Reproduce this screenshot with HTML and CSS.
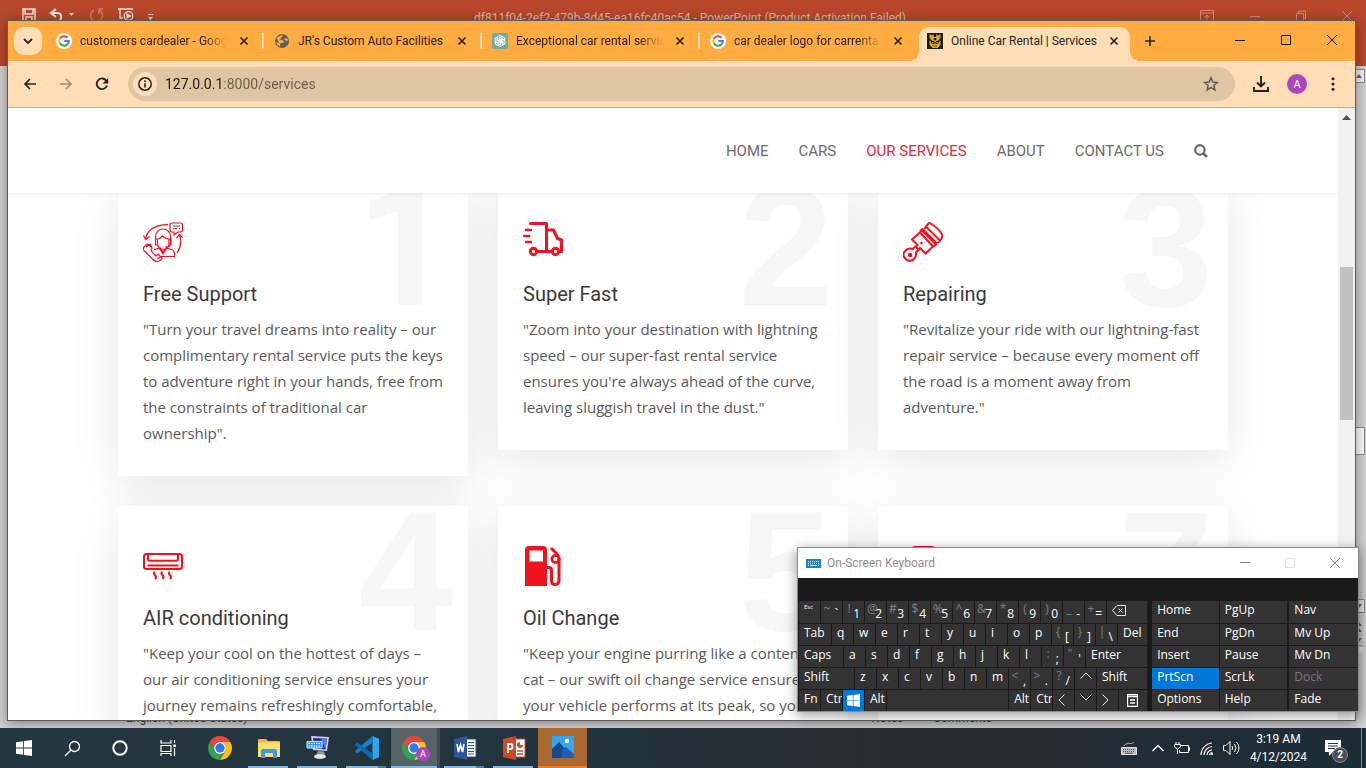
FILE: index.html
```html
<!DOCTYPE html>
<html lang="en">
<head>
<meta charset="utf-8">
<title>Online Car Rental | Services</title>
<link rel="stylesheet" href="styles.css">
</head>
<body>
<svg class="defs" aria-hidden="true">
  <symbol id="google" viewBox="0 0 16 16"><circle cx="8" cy="8" r="8" fill="#fff"/><g fill="none" stroke-width="2.1"><path d="M3.9 5.7A4.8 4.8 0 0 1 11.5 4.7" stroke="#ea4335"/><path d="M3.9 10.3A4.8 4.8 0 0 1 3.9 5.6" stroke="#fbbc05"/><path d="M11.2 11.6A4.8 4.8 0 0 1 3.9 10.2" stroke="#34a853"/><path d="M8.2 8H12.8A4.8 4.8 0 0 1 11.1 11.7" stroke="#4285f4"/></g></symbol>
  <symbol id="close" viewBox="0 0 10 10"><path d="M1.5 1.5l7 7M8.5 1.5l-7 7" stroke="#2a241c" stroke-width="1.7"/></symbol>
  <symbol id="chrome" viewBox="0 0 24 24"><path d="M2.47 6.5A11 11 0 0 1 21.53 6.5H12A5.5 5.5 0 0 0 7.24 14.75Z" fill="#e8453c"/><path d="M21.53 6.5A11 11 0 0 1 12 23L16.76 14.75A5.5 5.5 0 0 0 12 6.5Z" fill="#fbc116"/><path d="M12 23A11 11 0 0 1 2.47 6.5L7.24 14.75A5.5 5.5 0 0 0 16.76 14.75Z" fill="#30a350"/><circle cx="12" cy="12" r="5.5" fill="#fff"/><circle cx="12" cy="12" r="4.3" fill="#2b7de9"/></symbol>
  <symbol id="windows" viewBox="0 0 16 16"><path d="M0 2.3L7.2 1.2V7.6H0zM8 1.1L16 0v7.6H8zM0 8.4h7.2v6.4L0 13.7zM8 8.4h8V16l-8-1.1z" fill="#fff"/></symbol>
</svg>

<div class="desktop">
  <div class="workspace">

    <section class="ppt" aria-label="PowerPoint">
      <header class="ppt-bar">
        <div class="ppt-quick">
          <svg width="14" height="14" viewBox="0 0 14 14" fill="none" stroke="#f3ddd6" stroke-width="1.5"><path d="M1 1h12v12H1zM3 1v5h8V1M4 13V9h6v4"/></svg>
          <svg width="28" height="14" viewBox="0 0 28 14"><path d="M7 1L2 5l5 4M2.500 5H8q5 0 4 5t-4 4" fill="none" stroke="#f6e5df" stroke-width="2"/><path d="M20 5h5l-2.500 3z" fill="#f0cfc4"/></svg>
          <svg width="14" height="14" viewBox="0 0 14 14" fill="none" stroke="#cf7b63" stroke-width="1.500"><path d="M9 2a6 6 0 1 1-5 0M9 6V1h4"/></svg>
          <svg width="17" height="14" viewBox="0 0 17 14" fill="none" stroke="#f3ddd6" stroke-width="1.300"><path d="M1 1h15M3 1v9h3"/><circle cx="11.500" cy="8" r="4.300"/><path d="M10 6l3.500 2L10 10z" fill="#f3ddd6"/></svg>
          <svg width="7" height="12" viewBox="0 0 7 12"><path d="M1 6.500h5" stroke="#f3ddd6"/><path d="M1 9h5L3.500 12z" fill="#f3ddd6"/></svg>
        </div>
        <p class="ppt-title">df811f04-2ef2-479b-8d45-ea16fc40ac54 - PowerPoint (Product Activation Failed)</p>
        <div class="ppt-controls">
          <svg width="14" height="12" viewBox="0 0 14 12"><path d="M.5.500h13v11H.5zM.5 3h13M7 11V5M4.500 7.500L7 5l2.500 2.500"/></svg>
          <svg width="10" height="12" viewBox="0 0 10 12"><path d="M0 6.500h10"/></svg>
          <svg width="10" height="12" viewBox="0 0 10 12"><path d="M.5 3.500h7v7h-7zM2.500 3V1h7v7.500H8"/></svg>
          <svg width="10" height="12" viewBox="0 0 10 12"><path d="M0 1l10 10M10 1L0 11"/></svg>
        </div>
      </header>
      <div class="ppt-side">
        <svg width="12" height="600" viewBox="0 0 12 600" fill="none" stroke="#8a8a8a">
          <path d="M-1 3.500h11.500v13H-1z" fill="#eee"/><path d="M2 12l3-4 3 4z" fill="#666" stroke="none"/>
          <path d="M-1 361.500h11.500v27H-1z" fill="#fafafa"/>
          <path d="M-1 533.500h11.500v13H-1zM-1 600v-20h11.500" fill="#eee"/>
          <path d="M2 538h6l-3 4zM2 560l3-4 3 4zM2 566l3-4 3 4zM2 572h6l-3 4z" fill="#666" stroke="none"/>
        </svg>
      </div>
      <footer class="ppt-status"><span>English (United States)</span><span class="ppt-notes">≙ Notes</span><span>▭ Comments</span></footer>
    </section>

    <section class="browser" aria-label="Browser window">
      <div class="tabstrip">
        <button class="tab-search" aria-label="Search tabs"><svg width="10" height="6" viewBox="0 0 10 6"><path d="M1 1l4 4 4-4" fill="none" stroke="#222" stroke-width="1.800"/></svg></button>
        <div class="tab"><svg class="fav"><use href="#google"/></svg><span class="tab-title fade">customers cardealer - Google Search</span><button aria-label="Close tab"><svg class="x"><use href="#close"/></svg></button></div>
        <div class="tab"><svg class="fav" viewBox="0 0 16 16"><circle cx="8" cy="8" r="7" fill="#5c6064"/><path d="M2.500 4.500L6 3l3-1.500L8 4 5.500 6.500l3 .5 1.500 1.500-1 1.500-3 .2L2 9l1.500 3 3 2-.5-2.500zM9.500 6l3-.8L14.500 7l-2 1z" fill="#ffac42"/></svg><span class="tab-title">JR's Custom Auto Facilities</span><button aria-label="Close tab"><svg class="x"><use href="#close"/></svg></button></div>
        <div class="tab"><svg class="fav" viewBox="0 0 16 16"><rect width="16" height="16" rx="2" fill="#74aa9c"/><g fill="none" stroke="#fff" stroke-width="1"><path id="petal" d="M5.200 7.900V5A2.600 2.600 0 0 1 9.800 3.600L7 5.200V9.500"/><use href="#petal" transform="rotate(60 8 8)"/><use href="#petal" transform="rotate(120 8 8)"/><use href="#petal" transform="rotate(180 8 8)"/><use href="#petal" transform="rotate(240 8 8)"/><use href="#petal" transform="rotate(300 8 8)"/></g></svg><span class="tab-title fade">Exceptional car rental services</span><button aria-label="Close tab"><svg class="x"><use href="#close"/></svg></button></div>
        <div class="tab last"><svg class="fav"><use href="#google"/></svg><span class="tab-title fade">car dealer logo for carrental - Google</span><button aria-label="Close tab"><svg class="x"><use href="#close"/></svg></button></div>
        <div class="tab active"><svg class="fav" viewBox="0 0 16 16"><path fill="#17180f" d="M0 0h16v16H0z"/><path d="M2.500 1v4l1.500 1-1.500 2v4l3 3h5l3-3V8L12 6l1.500-1V1L11 2.500 9.500 1 9 4H7L6.500 1 5 2.500z" fill="#e4a41e"/><path d="M3.500 7l4 2-.5 2-2.500-1zM12.500 7l-4 2 .5 2 2.500-1zM6 13h4M7 5v2h2V5" fill="#17180f" stroke="#17180f" stroke-width=".5"/><path d="M5 9.200h1.500v1H5zM9.500 9.200H11v1H9.500z" fill="#6fc3e8"/></svg><span class="tab-title">Online Car Rental | Services</span><button aria-label="Close tab"><svg class="x"><use href="#close"/></svg></button></div>
        <button class="new-tab" aria-label="New tab"><svg width="12" height="12" viewBox="0 0 12 12"><path d="M6 1v10M1 6h10" stroke="#2a241c" stroke-width="1.600"/></svg></button>
        <div class="window-controls">
          <button aria-label="Minimize"><svg width="10" height="10" viewBox="0 0 10 10"><path d="M0 5.500h10"/></svg></button>
          <button aria-label="Maximize"><svg width="10" height="10" viewBox="0 0 10 10"><path d="M.5.500h9v9h-9z"/></svg></button>
          <button aria-label="Close"><svg width="10" height="10" viewBox="0 0 10 10"><path d="M0 0l10 10M10 0L0 10"/></svg></button>
        </div>
      </div>

      <div class="toolbar">
        <button aria-label="Back"><svg width="14" height="12" viewBox="0 0 14 12" fill="none" stroke="#222" stroke-width="1.700"><path d="M13 6H2M7 1L2 6l5 5"/></svg></button>
        <button aria-label="Forward"><svg width="14" height="12" viewBox="0 0 14 12" fill="none" stroke="#a08c74" stroke-width="1.700"><path d="M1 6h11M7 1l5 5-5 5"/></svg></button>
        <button aria-label="Reload"><svg width="14" height="14" viewBox="0 0 14 14"><path d="M12 8.500A5.300 5.300 0 1 1 11.500 4" fill="none" stroke="#222" stroke-width="1.800"/><path d="M13.200 1v5.500H7.700z" fill="#222"/></svg></button>
        <div class="omnibox">
          <span class="site-info"><svg width="14" height="14" viewBox="0 0 14 14"><circle cx="7" cy="7" r="6.200" fill="none" stroke="#222" stroke-width="1.500"/><path d="M7 6.200v4.300M7 3.300v1.600" stroke="#222" stroke-width="1.600"/></svg></span>
          <input type="text" aria-label="Address" value="127.0.0.1:8000/services">
          <button aria-label="Bookmark"><svg width="16" height="16" viewBox="0 0 16 16"><path d="M8 1.800l1.800 4.300 4.600.4-3.500 3 1 4.500L8 11.600 4.100 14l1-4.500-3.500-3 4.600-.4z" fill="none" stroke="#5f5a55" stroke-width="1.500"/></svg></button>
        </div>
        <button class="download" aria-label="Downloads"><svg width="16" height="16" viewBox="0 0 16 16" fill="none" stroke="#222" stroke-width="1.900"><path d="M8 0v10M4 6.500l4 4 4-4M1 11v4h14v-4"/></svg></button>
        <button class="avatar">A</button>
        <button class="menu" aria-label="Menu"><svg width="4" height="14" viewBox="0 0 4 14" fill="#222"><circle cx="2" cy="1.700" r="1.500"/><circle cx="2" cy="7" r="1.500"/><circle cx="2" cy="12.300" r="1.500"/></svg></button>
      </div>

      <div class="viewport">
        <div class="page">
          <header class="site-header">
            <nav>
              <a href="#">HOME</a><a href="#">CARS</a><a href="#" class="current">OUR SERVICES</a><a href="#">ABOUT</a><a href="#">CONTACT US</a>
              <a href="#" class="search" aria-label="Search"><svg width="14" height="14" viewBox="0 0 14 14" fill="none" stroke="#666"><circle cx="5.900" cy="5.900" r="4.700" stroke-width="2.200"/><path d="M9.300 9.300L13 13" stroke-width="2.600"/></svg></a>
            </nav>
          </header>
          <main class="services">
            <article class="card">
              <span class="num plain">1</span>
              <svg class="icon" viewBox="0 0 40 40" fill="none" stroke="#f1121f" stroke-width="1.200"><path d="M2.500 17Q5 3 25 2.600M.5 13.500l2.200 4 3.800-3"/><path d="M34 31q6-9 2.500-18M33.500 16l3-3.600 3 3.200"/><path d="M29 1h8.500q2 0 2 2v5q0 2-2 2H35l-4 3v-3h-2q-2 0-2-2V3q0-2 2-2z"/><path d="M30 4h7M30 6.700h4M36 6.700h1" stroke-width="1"/><path d="M12.500 22V14.500a7.500 7.500 0 0 1 15 0V22M14.500 17q2 0 5-3 3 3 6.500 3v4.500a5.700 5.700 0 0 1-11.500 0zM12.500 17h2v6h-2zM26 17h2v6h-2zM27 23q0 2-5 2"/><path d="M11 27.500l6-1.500 3 4 3.500-4 5 1.500q3.500 1 3 7H19M16.500 26.500L20 32l4-6"/><path d="M1 25l2.500-2.500q1-1 2 0L9 26q-3 2 4 8l2-2 3.500 3.500q1 1 0 2L16 39q-3 1.500-6-1.500L2.500 30Q-1 27 1 25zM3 25l4-3 2 3M14 37l5-3"/></svg>
              <h2>Free Support</h2>
              <p>"Turn your travel dreams into reality – our complimentary rental service puts the keys to adventure right in your hands, free from the constraints of traditional car ownership".</p>
            </article>
            <article class="card">
              <span class="num">2</span>
              <svg class="icon" viewBox="0 0 40 40" fill="none" stroke="#f1121f" stroke-width="3" stroke-linejoin="round" stroke-linecap="round"><path d="M7.500 1.500H23.500V29.500M24 8h6.500l4 8.500 4 1.500v11.500h-3M14 29.500h14.500"/><path d="M3 8h5M1.200 14h5M3 20h5" stroke-width="2.400"/><circle cx="10.500" cy="29.500" r="3.200"/><circle cx="32.500" cy="29.500" r="3.200"/></svg>
              <h2>Super Fast</h2>
              <p>"Zoom into your destination with lightning speed – our super-fast rental service ensures you're always ahead of the curve, leaving sluggish travel in the dust."</p>
            </article>
            <article class="card">
              <span class="num">3</span>
              <svg class="icon" viewBox="0 0 40 40" fill="none" stroke="#f1121f" stroke-width="2"><path d="M4 27.500q3-1.500 5.500-.5l5-4-5.500-5.500 8-7L30 24.500l-7.500 7L17 26l-4 4.500q.5 3.500-1.500 6-3 3.500-7.500 1.500-5-3-3-7.500Q2 28.500 4 27.500z"/><circle cx="7" cy="33" r="1.300" fill="#f1121f"/><path d="M17 9.500l1.500-1.500L33 22.500l-2.500 2M19 6.500l15 15M21.500 7L23 4.500 37 18.500 35 21M23 4.500L25.500 1.500q1-1 2 0 8 4.500 11.500 11 1 3-2 6M12.500 24.500l4 4"/><circle cx="18.500" cy="21" r=".6" stroke-width="1.400"/></svg>
              <h2>Repairing</h2>
              <p>"Revitalize your ride with our lightning-fast repair service – because every moment off the road is a moment away from adventure."</p>
            </article>
            <article class="card">
              <span class="num">4</span>
              <svg class="icon" viewBox="0 0 40 40" fill="none" stroke="#f1121f" stroke-width="2"><rect x="1" y="8" width="38" height="15" rx="2.500"/><path d="M5 8v5q0 1.800 2 1.800h26q2 0 2-1.800V8M4.500 19.500h31"/><path d="M12 26q-2 1.300 0 3.300t0 3.700M19.500 26q-2 1.300 0 3.300t0 3.700M27 26q-2 1.300 0 3.300t0 3.700" stroke-width="2.200"/></svg>
              <h2>AIR conditioning</h2>
              <p>"Keep your cool on the hottest of days – our air conditioning service ensures your journey remains refreshingly comfortable,</p>
            </article>
            <article class="card">
              <span class="num">5</span>
              <svg class="icon" viewBox="0 0 40 40" fill="none" stroke="#f1121f"><path d="M2 40V4q0-4 4-4h14q4 0 4 4v36zM6.500 4.500v11H20v-11z" fill="#f1121f" fill-rule="evenodd" stroke="none"/><path d="M24 21.500h2q2.500 0 2.500 3V35q0 3.500 3.500 3.500t4-3.500V12q0-2-2-4l-6-6" stroke-width="3"/><circle cx="32.500" cy="13" r="3.600" stroke-width="2.800"/></svg>
              <h2>Oil Change</h2>
              <p>"Keep your engine purring like a content cat – our swift oil change service ensures your vehicle performs at its peak, so you</p>
            </article>
            <article class="card">
              <span class="num">7</span>
              <svg class="icon" viewBox="0 0 40 40" fill="none" stroke="#f1121f" stroke-width="3"><rect x="8" y="1.500" width="25" height="37" rx="4"/></svg>
            </article>
          </main>
        </div>
        <div class="scrollbar"><svg width="9" height="5" viewBox="0 0 9 5"><path d="M0 5l4.500-5L9 5z" fill="#505050"/></svg><span class="thumb"></span></div>
      </div>
    </section>

    <section class="osk" aria-label="On-Screen Keyboard">
      <header class="osk-title">
        <svg width="15" height="9" viewBox="0 0 15 9"><path d="M0 0h15v9H0z" fill="#2a7ac8"/><path d="M2 2.500h11M2 4.500h11" stroke="#fff" stroke-dasharray="1 1"/><path d="M2 6.500h1M4 6.500h7M12 6.500h1" stroke="#fff"/></svg>
        <span>On-Screen Keyboard</span>
        <div class="osk-controls">
          <svg width="10" height="10" viewBox="0 0 10 10" stroke="#888"><path d="M0 4.500h10"/></svg>
          <svg width="10" height="10" viewBox="0 0 10 10" stroke="#e4e4e4"><path d="M.5.500h9v9h-9z"/></svg>
          <svg width="10" height="10" viewBox="0 0 10 10" stroke="#888"><path d="M0 0l10 10M10 0L0 10"/></svg>
        </div>
      </header>
      <div class="osk-body">
        <div class="keys">
          <div class="row">
            <button class="esc">Esc</button><button class="dual"><i>~</i><b>`</b></button><button class="dual"><i>!</i><b>1</b></button><button class="dual"><i>@</i><b>2</b></button><button class="dual"><i>#</i><b>3</b></button><button class="dual"><i>$</i><b>4</b></button><button class="dual"><i>%</i><b>5</b></button><button class="dual"><i>^</i><b>6</b></button><button class="dual"><i>&amp;</i><b>7</b></button><button class="dual"><i>*</i><b>8</b></button><button class="dual"><i>(</i><b>9</b></button><button class="dual"><i>)</i><b>0</b></button><button class="dual"><i>_</i><b>-</b></button><button class="dual"><i>+</i><b>=</b></button><button class="grow" aria-label="Backspace"><svg width="14" height="11" viewBox="0 0 14 11" fill="none" stroke="#eee"><path d="M5 .5h8.500v10H5L.5 5.500zM6.500 3.500l4 4M10.500 3.500l-4 4"/></svg></button>
          </div>
          <div class="row">
            <button class="tabkey">Tab</button><button>q</button><button>w</button><button>e</button><button>r</button><button>t</button><button>y</button><button>u</button><button>i</button><button>o</button><button>p</button><button class="dual"><i>{</i><b>[</b></button><button class="dual"><i>}</i><b>]</b></button><button class="dual"><i>|</i><b>\</b></button><button class="grow">Del</button>
          </div>
          <div class="row">
            <button class="caps">Caps</button><button>a</button><button>s</button><button>d</button><button>f</button><button>g</button><button>h</button><button>j</button><button>k</button><button>l</button><button class="dual"><i>:</i><b>;</b></button><button class="dual"><i>"</i><b>'</b></button><button class="grow">Enter</button>
          </div>
          <div class="row">
            <button class="shift">Shift</button><button>z</button><button>x</button><button>c</button><button>v</button><button>b</button><button>n</button><button>m</button><button class="dual"><i>&lt;</i><b>,</b></button><button class="dual"><i>&gt;</i><b>.</b></button><button class="dual"><i>?</i><b>/</b></button><button aria-label="Up"><svg width="12" height="7" viewBox="0 0 12 7"><path d="M.5 6.500L6 1l5.500 5.500" fill="none" stroke="#eee"/></svg></button><button class="grow">Shift</button>
          </div>
          <div class="row">
            <button>Fn</button><button>Ctrl</button><button class="on win" aria-label="Windows"><svg width="13" height="13"><use href="#windows"/></svg></button><button>Alt</button><button class="grow" aria-label="Space"></button><button>Alt</button><button>Ctrl</button><button aria-label="Left"><svg width="7" height="12" viewBox="0 0 7 12"><path d="M6.500.5L1 6l5.500 5.500" fill="none" stroke="#eee"/></svg></button><button aria-label="Down"><svg width="12" height="7" viewBox="0 0 12 7"><path d="M.5.500L6 6 11.500.500" fill="none" stroke="#eee"/></svg></button><button aria-label="Right"><svg width="7" height="12" viewBox="0 0 7 12"><path d="M.5.500L6 6 .5 11.500" fill="none" stroke="#eee"/></svg></button><button class="ctx" aria-label="Menu"><svg width="11" height="13" viewBox="0 0 11 13" fill="none" stroke="#fff"><path d="M.5.500h10v12H.5zM0 2.500h11M3 6h5M3 9h5" stroke-width="1.400"/></svg></button>
          </div>
        </div>
        <div class="pad"><button>Home</button><button>End</button><button>Insert</button><button class="on">PrtScn</button><button>Options</button></div>
        <div class="pad"><button>PgUp</button><button>PgDn</button><button>Pause</button><button>ScrLk</button><button>Help</button></div>
        <div class="pad"><button>Nav</button><button>Mv Up</button><button>Mv Dn</button><button disabled>Dock</button><button>Fade</button></div>
      </div>
    </section>
  </div>

  <footer class="taskbar">
    <button class="sys" aria-label="Start"><svg width="16" height="16"><use href="#windows"/></svg></button>
    <button class="sys" aria-label="Search"><svg width="17" height="17" viewBox="0 0 17 17" fill="none" stroke="#fff" stroke-width="1.300"><circle cx="10.500" cy="6.500" r="5"/><path d="M7 10L1 16"/></svg></button>
    <button class="sys" aria-label="Cortana"><svg width="16" height="16" viewBox="0 0 16 16"><circle cx="8" cy="8" r="6.700" fill="none" stroke="#fff" stroke-width="2"/></svg></button>
    <button class="sys" aria-label="Task view"><svg width="17" height="16" viewBox="0 0 17 16" fill="none" stroke="#fff" stroke-width="1.200"><path d="M1 0v3h10V0M1 5.500h10v6H1zM1 16v-2.500h10V16M14.500 0v3M14.500 8v8"/><path d="M13.300 4.500h2.500v2.500h-2.500z" fill="#fff" stroke="none"/></svg></button>
    <button class="app first" aria-label="Chrome"><svg width="26" height="26"><use href="#chrome"/></svg></button>
    <button class="app run" aria-label="File Explorer"><svg width="22" height="22" viewBox="0 0 22 22"><path d="M0 3q0-1 1-1h7l2 2h11q1 0 1 1v14H0z" fill="#f2b632"/><path d="M0 5.500h22V20H0z" fill="#fddc73"/><path d="M3 21v-7q0-2 2-2h12q2 0 2 2v7h-4v-5H7v5z" fill="#3c9bdc"/></svg></button>
    <button class="app run" aria-label="On-Screen Keyboard"><svg width="24" height="24" viewBox="0 0 24 24"><path d="M5 0l18 1-2 14-14-1z" fill="#cfd5dc"/><path d="M7 2l14 .5-1.500 11L8 12.500z" fill="#1a35c9"/><path d="M15 3l6-.5-1.500 11z" fill="#5877ea"/><path d="M12 15l6 .500 1 4-9 .5z" fill="#8d949b"/><ellipse cx="14" cy="20.500" rx="6" ry="2.600" fill="#dfe3e6"/><path d="M1 5.500h15v6.500H1z" fill="#3c9ade" stroke="#d7e9f7"/><path d="M2.500 7.500h12M2.500 10h12" stroke="#fff" stroke-dasharray="1.500 1"/></svg></button>
    <button class="app run multi" aria-label="Visual Studio Code"><svg width="24" height="24" viewBox="0 0 24 24"><path d="M17.500 0L24 2.700V21.300L17.500 24z" fill="#2aa7f0"/><path d="M17.500 0L0 15l2 2.500L17.500 6.500z" fill="#1580cc"/><path d="M17.500 24L0 9l2-2.500 15.500 11z" fill="#0b6db8"/></svg></button>
    <button class="app run current" aria-label="Chrome profile A"><svg width="26" height="26"><use href="#chrome"/></svg><span class="badge">A</span></button>
    <button class="app run multi" aria-label="Word"><svg width="24" height="24" viewBox="0 0 24 24"><path d="M13 3h10v18H13z" fill="#fff" stroke="#2b579a"/><path d="M15 6.500h6M15 9.500h6M15 12.500h6M15 15.500h6M15 18h6" stroke="#2b579a"/><path d="M1 3l13-3v24L1 21z" fill="#2b579a"/><path d="M4 8l1.500 8 2-7 2 7L11 8" fill="none" stroke="#fff" stroke-width="1.600"/></svg></button>
    <button class="app run" aria-label="PowerPoint"><svg width="24" height="24" viewBox="0 0 24 24"><path d="M13 3h10v18H13z" fill="#fff" stroke="#d04423"/><path d="M15 15h6M15 18h6" stroke="#d04423" stroke-width="1.500"/><circle cx="18" cy="9" r="3" fill="#d04423"/><path d="M18 9V5.500h3.500V9z" fill="#fff"/><path d="M1 3l13-3v24L1 21z" fill="#d24726"/><path d="M6 17V8h2.500q2 0 2 2.500T8.500 13H6" fill="none" stroke="#fff" stroke-width="1.900"/></svg></button>
    <button class="app photos" aria-label="Photos"><svg width="22" height="22" viewBox="0 0 22 22"><path d="M0 0h22v22H0z" fill="#35a5f0"/><path d="M0 13l7-7 15 16H0z" fill="#17498c"/><path d="M10 14l4-3 8 7v4H10z" fill="#1d62b0"/><circle cx="15" cy="5" r="2.200" fill="#fff"/></svg></button>
    <div class="tray">
      <svg width="16" height="15" viewBox="0 0 16 15"><path d="M.5 6.500h15v7H.5z" fill="#bbb" stroke="#ddd"/><path d="M2 8.500h12M2 10.500h12" stroke="#555" stroke-dasharray="1 1"/><path d="M4 12.300h8" stroke="#555"/><path d="M3 5q1-3 5-2.500T13 1" fill="none" stroke="#aaa"/></svg>
      <svg class="caret" width="12" height="8" viewBox="0 0 12 8"><path d="M.5 7L6 1.500 11.500 7" fill="none" stroke="#fff" stroke-width="1.300"/></svg>
      <svg width="16" height="12" viewBox="0 0 16 12" fill="none" stroke="#fff"><path d="M7 3.500h7.500v7h-9V8M14.500 5.500h1v3h-1M2 0v3M5 0v3M.5 2.500h6V5L3.500 7 .5 5zM3.500 7v5"/></svg>
      <svg width="13" height="13" viewBox="0 0 13 13" fill="none" stroke="#eee" stroke-width="1.200"><path d="M1 13A12 12 0 0 1 12 1M4 13a9 9 0 0 1 8-8.500M7 13a6 6 0 0 1 5-5.200M9.500 13A3 3 0 0 1 12 10.500"/><circle cx="12" cy="12" r="1" fill="#fff"/></svg>
      <svg width="17" height="14" viewBox="0 0 17 14" fill="none" stroke="#fff"><path d="M.5 4.500H3l4-4v13l-4-4H.5zM9 5q1.500 2 0 4M11.500 3q3 4 0 8M13.500 1q5 6 0 12"/></svg>
      <time>3:19 AM<br>4/12/2024</time>
      <span class="notice"><svg width="16" height="17" viewBox="0 0 16 17"><path d="M0 0h16v12H8l-4 4v-4H0z" fill="#fff"/><path d="M3 3.500h10M3 6h10M3 8.500h7" stroke="#22313a"/></svg><b>2</b></span>
      <span class="peek"></span>
    </div>
  </footer>
</div>
</body>
</html>
```

FILE: styles.css
```css
* { box-sizing: border-box; }
body { margin: 0; font-family: Roboto, "Noto Sans", sans-serif; font-size: 12px; overflow: hidden; }
button { margin: 0; padding: 0; border: 0; background: none; font: inherit; color: inherit; display: flex; align-items: center; justify-content: center; }
svg { display: block; flex: none; }
.defs { position: absolute; width: 0; height: 0; }
h2, p { margin: 0; }

.desktop { height: 100vh; display: grid; grid-template-rows: 1fr 40px; }
.workspace { position: relative; overflow: hidden; min-height: 0; }

/* PowerPoint window at the back of the desktop */
.ppt { height: 100%; display: flex; flex-direction: column; background: #d2d2d2; }
.ppt-bar { height: 66px; background: #b7472a; display: grid; grid-template-columns: 1fr auto 1fr; align-items: start; padding: 8px 8px 0 22px; flex: none; }
.ppt-quick { display: flex; gap: 13px; }
.ppt-title { font-size: 12px; line-height: 20px; color: #e5b0a0; white-space: nowrap; }
.ppt-controls { display: flex; gap: 36px; justify-content: flex-end; padding: 2px 6px 0 0; fill: none; stroke: #d58b76; }
.ppt-side { flex: 1; display: flex; justify-content: flex-end; min-height: 0; overflow: hidden; }
.ppt-status { height: 20px; flex: none; display: flex; gap: 16px; padding: 0 374px 0 126px; line-height: 20px; color: #444; }
.ppt-notes { margin-left: auto; }

/* Browser window */
.browser { position: absolute; inset: 20px 10px 7px 7px; border: 1px solid #5b5b58; background: #fff; display: flex; flex-direction: column; box-shadow: 0 2px 12px rgba(0, 0, 0, .4); color: #2a241c; }
.tabstrip { height: 40px; flex: none; background: #ffac42; display: flex; padding: 6px 0 0 6px; }
.tab-search { width: 28px; height: 28px; border-radius: 10px; background: #ffdeb5; margin-right: 4px; }
.tab { flex: 0 1 218px; min-width: 0; height: 28px; display: flex; align-items: center; padding: 0 15px 0 10px; position: relative; }
.tab:not(.last):not(.active)::after { content: ""; position: absolute; right: 0; top: 6px; width: 2px; height: 16px; background: #ffdeb5; }
.fav { width: 16px; height: 16px; }
.x { width: 10px; height: 10px; }
.tab-title { flex: 1; margin: 0 12px 0 8px; white-space: nowrap; overflow: hidden; }
.tab-title.fade { -webkit-mask-image: linear-gradient(90deg, #000 124px, transparent 147px); mask-image: linear-gradient(90deg, #000 124px, transparent 147px); }
.tab.active { flex-basis: 211px; height: 34px; padding: 0 11px 6px 8px; background: #ffdeb5; border-radius: 10px 10px 0 0; margin-left: 1px; }
.tab.active::before, .tab.active::after { content: ""; position: absolute; bottom: 0; width: 10px; height: 10px; }
.tab.active::before { right: 100%; background: radial-gradient(circle at 0 0, transparent 10px, #ffdeb5 10px); }
.tab.active::after { left: 100%; background: radial-gradient(circle at 100% 0, transparent 10px, #ffdeb5 10px); }
.new-tab { width: 28px; height: 28px; margin-left: 6px; }
.window-controls { display: flex; margin-left: auto; height: 26px; fill: none; stroke: #111; }
.window-controls button { width: 46px; }

.toolbar { height: 47px; flex: none; background: #ffdeb5; border-bottom: 1px solid #c9b08f; display: flex; align-items: center; padding: 0 20px 0 15px; }
.toolbar > button:nth-child(2), .toolbar > button:nth-child(3) { margin-left: 22px; }
.omnibox { flex: 1; height: 34px; margin-left: 19px; border-radius: 17px; background: #dfc5a2; display: flex; align-items: center; padding: 0 16px 0 5px; }
.site-info { width: 24px; height: 24px; border-radius: 12px; background: #ffdeb5; display: flex; align-items: center; justify-content: center; }
.omnibox input { flex: 1; border: 0; outline: 0; padding: 0; margin-left: 8px; font: 14px Roboto, sans-serif; color: transparent; background: linear-gradient(90deg, #1f1b16 56px, #6b5d4a 56px); -webkit-background-clip: text; background-clip: text; }
.download { margin-left: 18px; }
.avatar { width: 20px; height: 20px; border-radius: 10px; background: #ab47bc; color: #fff; font-size: 11px; margin-left: 18px; }
.menu { margin-left: 24px; }

.viewport { flex: 1; min-height: 0; display: grid; grid-template-columns: 1fr 17px; }
.page { overflow: hidden; min-width: 0; }
.scrollbar { background: #f1f1f1; display: flex; flex-direction: column; align-items: center; padding-top: 7px; }
.thumb { width: 13px; height: 153px; background: #c1c1c1; margin-top: 147px; }

/* Web site */
.site-header { position: relative; z-index: 1; height: 85px; background: #fff; box-shadow: 0 0 5px rgba(0, 0, 0, .12); display: flex; align-items: center; justify-content: flex-end; padding-right: 130px; }
.site-header nav { display: flex; gap: 30px; align-items: center; font: 15px/20px Roboto, sans-serif; }
.site-header a { color: #6c6c6c; text-decoration: none; }
.site-header a.current { color: #db2d3a; }
.services { max-width: 1110px; margin: -11px auto 0; display: grid; grid-template-columns: repeat(3, 1fr); gap: 30px; align-items: start; }
.card { position: relative; background: #fff; padding: 40px 25px 30px; box-shadow: 0 10px 45px rgba(0, 0, 0, .1); }
.card:last-child { min-height: 294px; }
.num { position: absolute; right: 15px; top: -20px; font: bold 170px/1 "Liberation Sans", sans-serif; color: #f6f6f6; }
.num.plain { font-family: Roboto, sans-serif; }
.icon { position: relative; width: 40px; height: 40px; }
.card h2 { position: relative; margin: 20px 0 10px; font: 20px/24px Roboto, sans-serif; color: #3a3a3a; }
.card p { position: relative; font: 15px/26px "Open Sans", sans-serif; color: #5a5a5a; }

/* On-screen keyboard */
.osk { position: absolute; right: 7px; bottom: 16px; width: 562px; border: 1px solid #8d8d8d; background: #1a1a1a; box-shadow: 0 3px 12px rgba(0, 0, 0, .4); }
.osk-title { height: 30px; background: #fff; display: flex; align-items: center; gap: 6px; padding: 0 18px 0 8px; color: #8f8f8f; }
.osk-controls { margin-left: auto; display: flex; gap: 35px; fill: none; }
.osk-body { display: grid; grid-template-columns: 349fr 66fr 67fr 69fr; column-gap: 1px; padding: 23px 0 0 1px; color: #fff; font-family: "Open Sans", sans-serif; }
.keys { display: flex; flex-direction: column; gap: 1px; margin-right: 4px; }
.row { display: flex; gap: 1px; height: 21px; }
.row:first-child { height: 22px; }
.osk-body button { background: #333; align-items: flex-start; justify-content: flex-start; padding: 0 0 0 5px; line-height: 17px; overflow: hidden; }
.row button { width: 21px; flex: none; }
.row button svg { margin-top: 4px; }
.row .grow { flex: 1; width: auto; }
.row .esc { font-size: 6px; line-height: 12px; }
.row .tabkey { width: 32px; }
.row .caps { width: 44px; }
.row .shift { width: 55px; }
.row .ctx { width: 28px; padding-left: 8px; }
.row .win { padding-left: 4px; }
.osk-body button.on { background: #0078d7; }
.osk-body .dual { display: grid; grid-template-columns: 1fr auto; padding: 0 4px 0 2px; }
.dual i, .dual b { font-style: normal; font-weight: 400; }
.dual i { color: #808080; line-height: 15px; width: 8px; }
.dual b { padding-top: 4px; line-height: 18px; }
.pad { display: grid; grid-template-rows: 22px repeat(4, 21px); gap: 1px; }
.pad:last-child { margin-left: 1px; }
.osk-body .pad button:disabled { color: #777; }

/* Taskbar */
.taskbar { background: linear-gradient(90deg, #243640, #22333b 45%, #282b2c 70%, #1f2e36 85%, #1d2d36); display: flex; color: #fff; }
.sys { width: 48px; }
.app { width: 49px; position: relative; }
.app.first { margin-left: 3px; }
.run::after { content: ""; position: absolute; left: 4px; right: 5px; bottom: 0; height: 2px; background: #76b9ed; }
.run.multi::after { background: linear-gradient(90deg, #76b9ed 32px, #4c80a8 32px); }
.run.current { background: #566369; border-right: 3px solid #3f4d55; }
.run.current::after { left: 0; right: 0; }
.badge { position: absolute; right: 7px; bottom: 7px; width: 14px; height: 14px; border-radius: 7px; background: #ab47bc; font-size: 9px; line-height: 14px; text-align: center; }
.photos { background: #a9682f; border-bottom: 2px solid #ff7a0a; }
.tray { margin-left: auto; display: flex; align-items: center; gap: 10px; }
.tray .caret { margin-left: 5px; }
.tray time { text-align: center; line-height: 18px; }
.notice { position: relative; width: 28px; margin-left: 8px; }
.notice b { position: absolute; left: 7px; top: 7px; width: 16px; height: 16px; border-radius: 8px; background: #4a5156; border: 1px solid #889; font-size: 10px; line-height: 14px; text-align: center; }
.peek { width: 5px; height: 40px; border-left: 1px solid #79858b; margin-left: -2px; }
```
